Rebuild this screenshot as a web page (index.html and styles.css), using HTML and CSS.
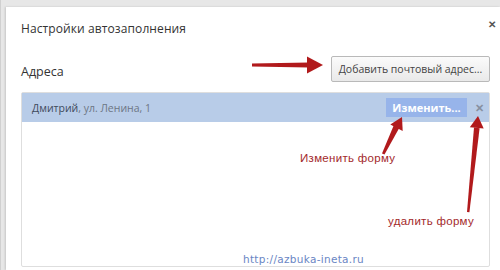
FILE: index.html
```html
<!DOCTYPE html>
<html lang="ru">
  <head>
    <meta charset="utf-8">
    <title>Настройки автозаполнения</title>
    <link rel="stylesheet" href="styles.css">
  </head>
  <body>
    <div class="screen">
      <div class="dialog">
        <div class="header">
          <h1 class="title">Настройки автозаполнения</h1>
          <span class="close">&#x2715;</span>
        </div>
        <div class="section">
          <h2 class="label">Адреса</h2>
          <button type="button" class="add">Добавить почтовый адрес...</button>
        </div>
        <div class="list">
          <div class="entry">
            <span class="name">Дмитрий</span><span class="details">, ул. Ленина, 1</span>
            <span class="spacer"></span>
            <button type="button" class="edit">Изменить...</button>
            <span class="remove">&#x2715;</span>
          </div>
          <div class="footer">
            <span class="site">http://azbuka-ineta.ru</span>
          </div>
        </div>
      </div>

      <!-- annotations drawn over the screenshot -->
      <svg class="marks" width="500" height="270" viewBox="0 0 500 270">
        <g fill="#b11a1c">
          <polygon points="251,63.6 308,62.6 308,67.4 251,66.4"/>
          <polygon points="306,56.5 322,65 306,73.5"/>
          <polygon points="381,153.5 383.5,154.5 398.5,127.6 393,124.8"/>
          <polygon points="401,117 401.7,130.9 389.3,124.5"/>
          <polygon points="466,212 468.4,212.2 478.6,128.2 473,127.6"/>
          <polygon points="477,116 482.7,128.6 468.8,127.2"/>
        </g>
      </svg>
      <span class="note note-edit">Изменить форму</span>
      <span class="note note-delete">удалить форму</span>
    </div>
  </body>
</html>
```

FILE: styles.css
```css
*{
  padding: 0px;
  margin: 0px;
  box-sizing: border-box;
}

:root{
  --red: #a3292b;
  --rowBlue: #b8cce8;
  --editBlue: #97b4ea;
  --grey: #e7e7e7;
  --text: #333333;
}

body{
  width: 500px;
  height: 270px;
  overflow: hidden;
  font-family: "Open Sans", "Noto Sans", sans-serif;
}

.screen{
  position: relative;
  width: 500px;
  height: 270px;
  padding: 7px 0px 0px 5px;
  background-color: var(--grey);
  border-left: 1px solid #d0d0d0;
}

.dialog{
  height: 263px;
  background-color: white;
  padding: 12px 10px 0px 15px;
  display: flex;
  flex-direction: column;
  box-shadow: -1px 0px 2px rgba(0,0,0,0.15);
}

.header{
  display: flex;
  align-items: center;
  justify-content: space-between;
  height: 18px;
}

.title{
  font-size: 12px;
  font-weight: normal;
  color: var(--text);
  letter-spacing: 0.1px;
}

.close{
  font-size: 10px;
  font-weight: bold;
  color: #555;
  margin-right: -6px;
  margin-top: -8px;
}

.section{
  display: flex;
  align-items: center;
  justify-content: space-between;
  margin-top: 19px;
  height: 26px;
}

.label{
  font-size: 12.5px;
  font-weight: normal;
  color: var(--text);
  margin-top: 4px;
}

.add{
  width: 159px;
  height: 26px;
  font-family: "Open Sans", "Noto Sans", sans-serif;
  font-size: 10.5px;
  color: #444;
  border: 1px solid #b9b9b9;
  border-radius: 2px;
  background: linear-gradient(#fbfbfb, #e9e9e9);
}

.list{
  flex-grow: 1;
  margin-top: 10px;
  margin-bottom: 3px;
  border: 1px solid #dedede;
  border-radius: 2px;
  display: flex;
  flex-direction: column;
}

.entry{
  display: flex;
  align-items: center;
  height: 29px;
  padding: 0px 5px 0px 10px;
  background-color: var(--rowBlue);
  font-size: 10.5px;
}

.name{
  color: #3f4a5c;
}

.details{
  color: #6d7684;
}

.spacer{
  flex-grow: 1;
}

.edit{
  width: 81px;
  height: 19px;
  font-family: "Open Sans", "Noto Sans", sans-serif;
  font-size: 11px;
  font-weight: bold;
  color: white;
  border: none;
  background-color: var(--editBlue);
}

.remove{
  width: 17px;
  text-align: right;
  font-size: 11px;
  font-weight: bold;
  color: #8790a0;
}

.footer{
  flex-grow: 1;
  display: flex;
  align-items: flex-end;
  justify-content: flex-start;
  padding: 0px 0px 1px 221px;
}

.site{
  font-family: "DejaVu Sans", sans-serif;
  font-size: 10.5px;
  color: #6a86c4;
  letter-spacing: 0.3px;
}

.marks{
  position: absolute;
  left: 0px;
  top: 0px;
}

.note{
  position: absolute;
  font-family: "Liberation Sans", Arial, sans-serif;
  font-size: 11.5px;
  letter-spacing: 0.3px;
  color: var(--red);
}

.note-edit{
  left: 299px;
  top: 152px;
}

.note-delete{
  left: 387px;
  top: 215px;
}
```
